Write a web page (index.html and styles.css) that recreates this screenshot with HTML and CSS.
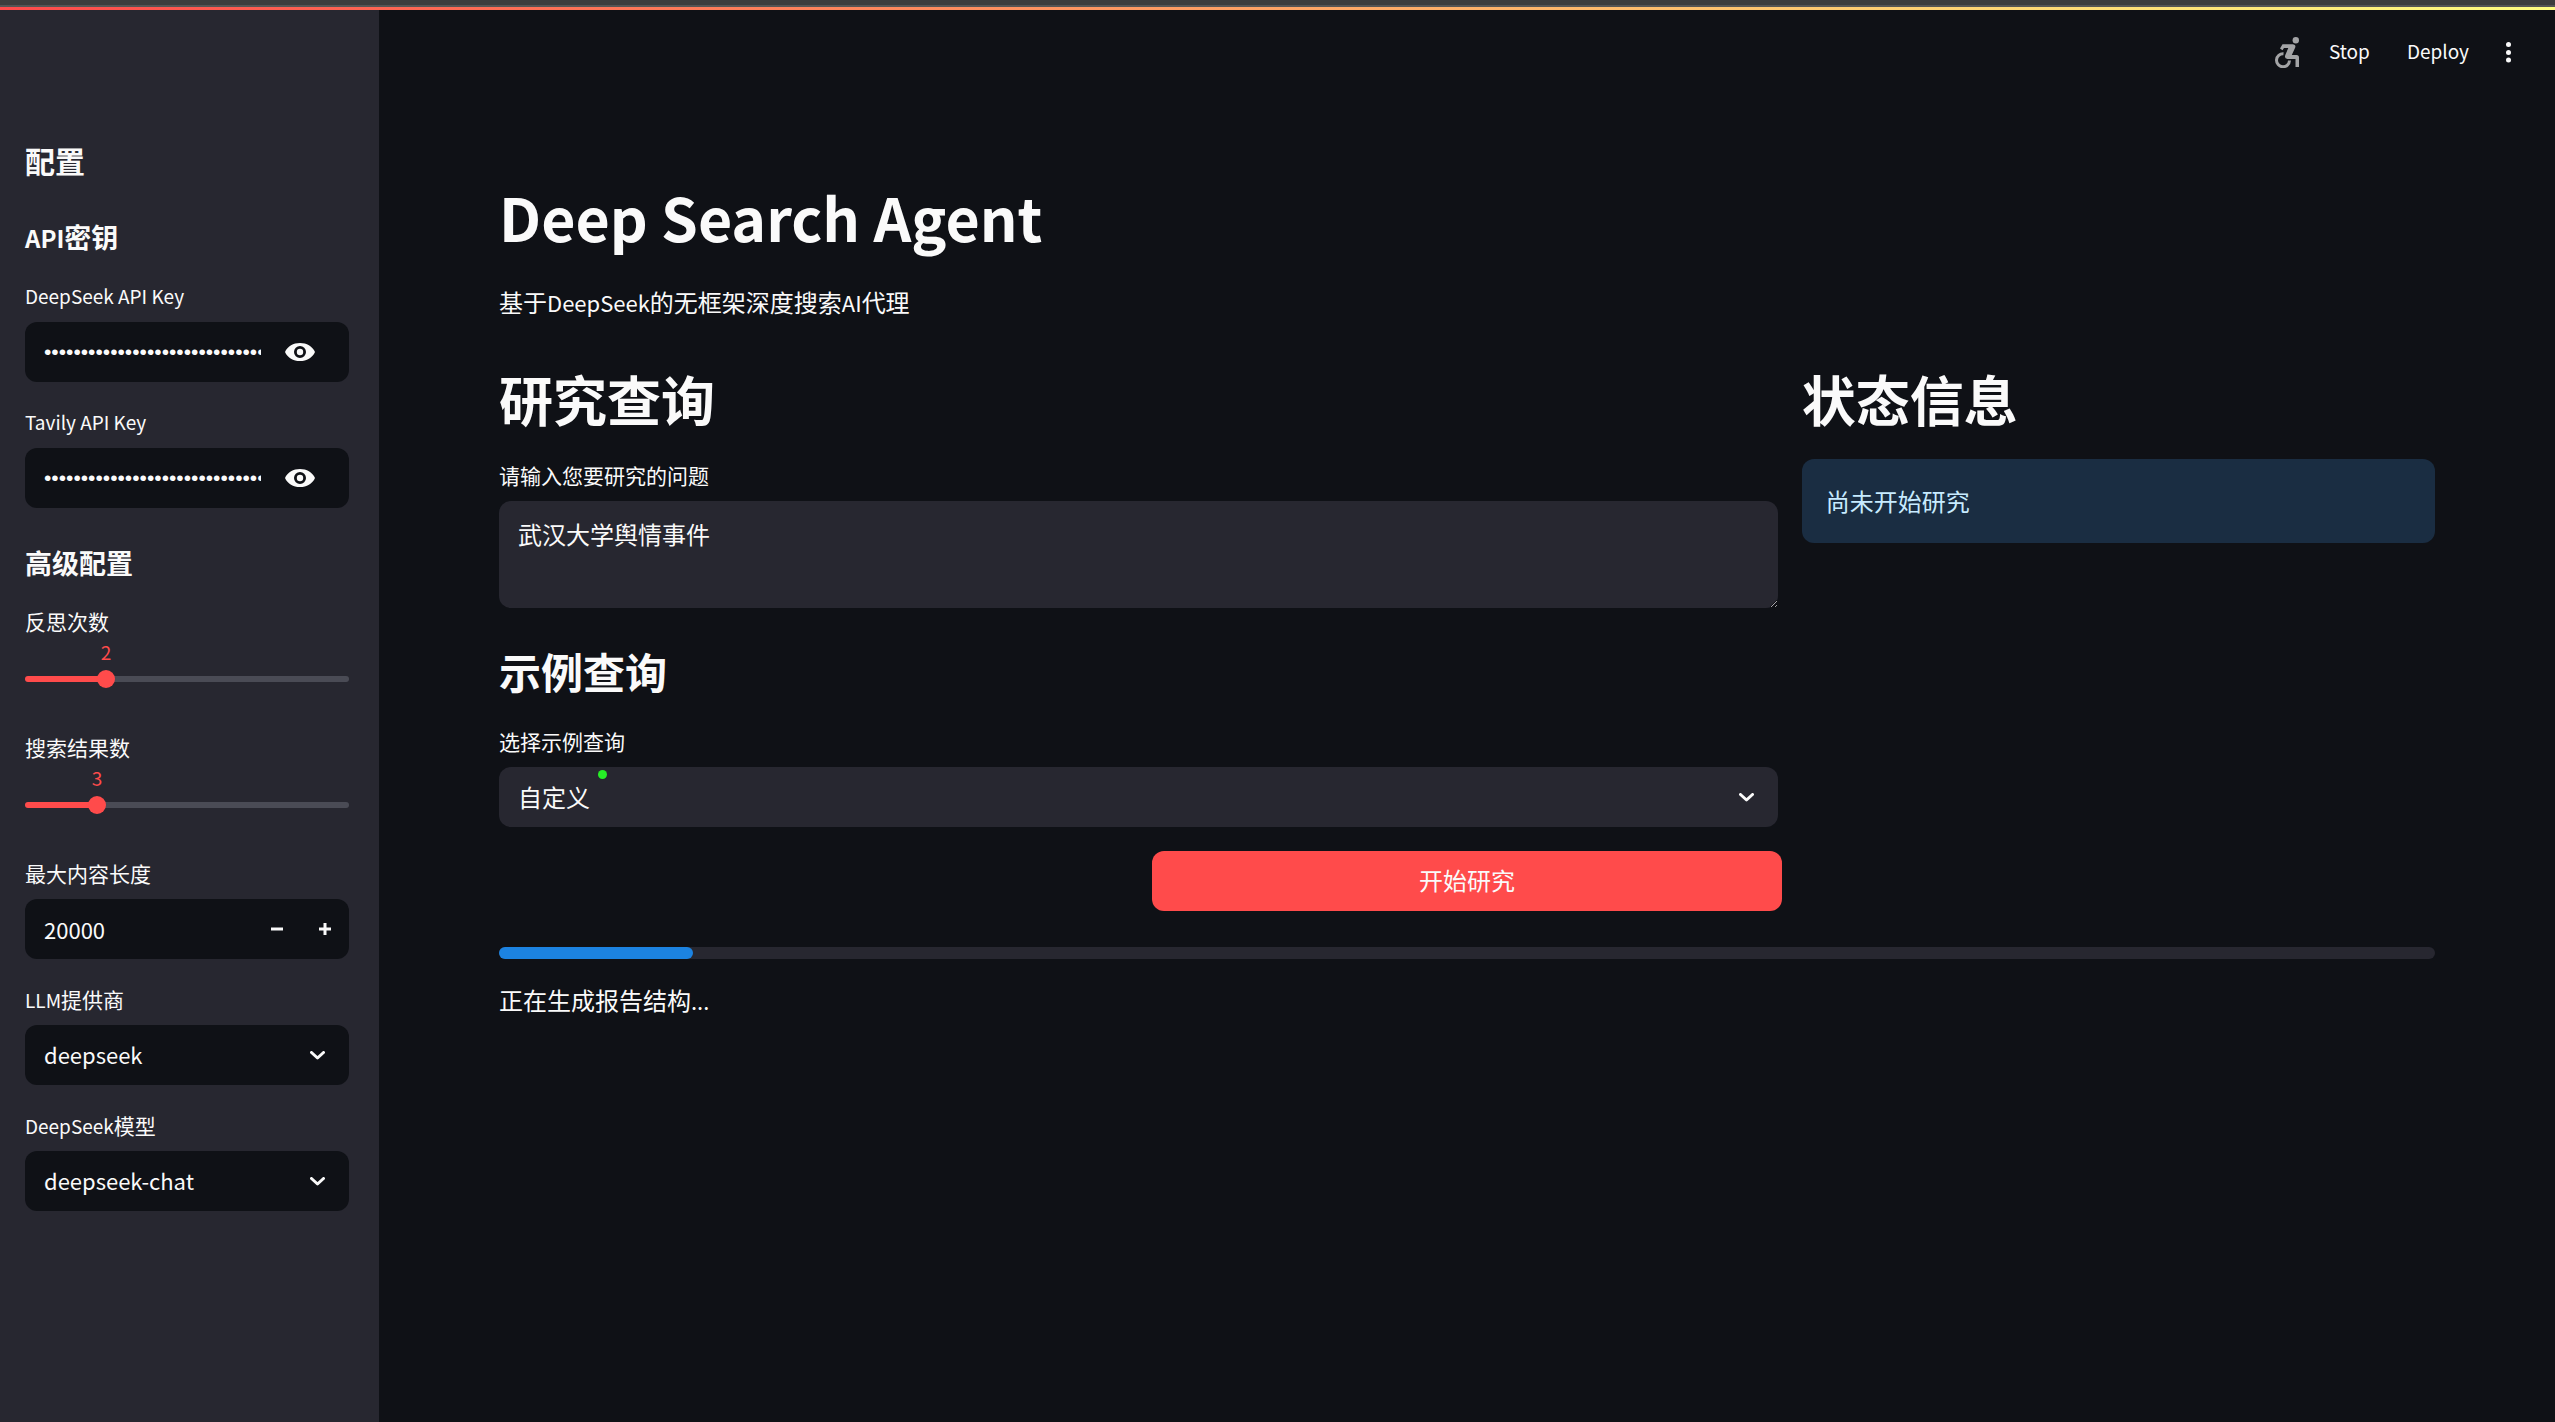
FILE: index.html
```html
<!DOCTYPE html>
<html lang="zh-CN">
<head>
<meta charset="utf-8">
<title>Deep Search Agent</title>
<link rel="stylesheet" href="styles.css">
</head>
<body>
<div class="window-edge"></div>
<div class="decoration"></div>
<div class="app">
  <aside class="sidebar">
    <h2 class="sidebar-title">配置</h2>
    <h3 class="sidebar-heading"><span class="latin-heading">API</span>密钥</h3>
    <div class="field">
      <label class="label label-latin" for="deepseek-key">DeepSeek API Key</label>
      <div class="control">
        <input class="secret" id="deepseek-key" type="password" value="00000000000000000000000000000000000">
        <button class="icon-button reveal" type="button" aria-label="Show password">
          <svg width="30" height="18" viewBox="0 0 30 18"><path fill="currentColor" fill-rule="evenodd" d="M15 0C8.2 0 2.8 3.400.3 8.300Q0 9 .3 9.700C2.800 14.600 8.200 18 15 18S27.200 14.600 29.700 9.700Q30 9 29.700 8.300C27.200 3.400 21.800 0 15 0ZM15 3a6 6 0 1 1 0 12a6 6 0 0 1 0-12Z"/><circle cx="15" cy="9" r="3.200" fill="currentColor"/></svg>
        </button>
      </div>
    </div>
    <div class="field">
      <label class="label label-latin" for="tavily-key">Tavily API Key</label>
      <div class="control">
        <input class="secret" id="tavily-key" type="password" value="00000000000000000000000000000000000">
        <button class="icon-button reveal" type="button" aria-label="Show password">
          <svg width="30" height="18" viewBox="0 0 30 18"><path fill="currentColor" fill-rule="evenodd" d="M15 0C8.2 0 2.8 3.400.3 8.300Q0 9 .3 9.700C2.800 14.600 8.200 18 15 18S27.200 14.600 29.700 9.700Q30 9 29.700 8.300C27.200 3.400 21.800 0 15 0ZM15 3a6 6 0 1 1 0 12a6 6 0 0 1 0-12Z"/><circle cx="15" cy="9" r="3.200" fill="currentColor"/></svg>
        </button>
      </div>
    </div>
    <h3 class="sidebar-heading">高级配置</h3>
    <div class="field slider-field">
      <label class="label" for="reflections">反思次数</label>
      <div class="slider" style="--fill: 25%">
        <output class="slider-value" for="reflections">2</output>
        <input class="range" id="reflections" type="range" min="1" max="5" value="2">
      </div>
    </div>
    <div class="field slider-field">
      <label class="label" for="results">搜索结果数</label>
      <div class="slider" style="--fill: 22.22%">
        <output class="slider-value" for="results">3</output>
        <input class="range" id="results" type="range" min="1" max="10" value="3">
      </div>
    </div>
    <div class="field">
      <label class="label" for="max-length">最大内容长度</label>
      <div class="control">
        <input class="text latin" id="max-length" type="text" inputmode="numeric" value="20000">
        <button class="icon-button" type="button" aria-label="减少"><svg width="12" height="12" viewBox="0 0 12 12"><path fill="currentColor" d="M0 4.500h12v3H0z"/></svg></button>
        <button class="icon-button" type="button" aria-label="增加"><svg width="12" height="12" viewBox="0 0 12 12"><path fill="currentColor" d="M0 4.500h4.500V0h3v4.500H12v3H7.500V12h-3V7.500H0z"/></svg></button>
      </div>
    </div>
    <div class="field">
      <label class="label" for="provider"><span class="label-latin">LLM</span>提供商</label>
      <div class="control">
        <select class="select latin" id="provider"><option>deepseek</option></select>
        <svg class="chevron" width="15" height="9" viewBox="0 0 15 9"><path d="M1.500 1.500l6 5.500 6-5.500"/></svg>
      </div>
    </div>
    <div class="field">
      <label class="label" for="model"><span class="label-latin">DeepSeek</span>模型</label>
      <div class="control">
        <select class="select latin" id="model"><option>deepseek-chat</option></select>
        <svg class="chevron" width="15" height="9" viewBox="0 0 15 9"><path d="M1.500 1.500l6 5.500 6-5.500"/></svg>
      </div>
    </div>
  </aside>

  <div class="page">
    <header class="toolbar">
      <svg class="running" width="24" height="31" viewBox="0 0 24 31" aria-label="Running"><circle cx="20.800" cy="3.200" r="3.200"/><path d="M7.500 7.300H17.500C20.200 7.300 21 9.200 20 11L16.800 18H21.500Q24 18 24 20.500V30H20.500V22H12.500Q9 21.500 10.300 18L13.300 11H9L7.500 13.300L5 11.500Z"/><path class="wheel" d="M8.500 16.800A6.500 6.500 0 1 0 14.500 23.500"/></svg>
      <button class="toolbar-button" type="button">Stop</button>
      <button class="toolbar-button" type="button">Deploy</button>
      <button class="menu-button" type="button" aria-label="Menu"><svg width="5" height="21" viewBox="0 0 5 21" fill="currentColor"><circle cx="2.500" cy="2.500" r="2.500"/><circle cx="2.500" cy="10.500" r="2.500"/><circle cx="2.500" cy="18" r="2.500"/></svg></button>
    </header>

    <main class="content">
      <h1 class="title">Deep Search Agent</h1>
      <p class="text-line intro">基于<span class="latin">DeepSeek</span>的无框架深度搜索<span class="latin">AI</span>代理</p>

      <div class="columns">
        <section class="query">
          <h2 class="heading">研究查询</h2>
          <div class="field">
            <label class="label" for="question">请输入您要研究的问题</label>
            <textarea class="question" id="question">武汉大学舆情事件</textarea>
          </div>
          <h3 class="subheading">示例查询</h3>
          <div class="field">
            <label class="label" for="example">选择示例查询</label>
            <div class="control">
              <select class="select" id="example"><option>自定义</option></select>
              <svg class="chevron" width="15" height="9" viewBox="0 0 15 9"><path d="M1.500 1.500l6 5.500 6-5.500"/></svg>
              <span class="marker"></span>
            </div>
          </div>
        </section>
        <section class="status">
          <h2 class="heading">状态信息</h2>
          <p class="notice">尚未开始研究</p>
        </section>
      </div>

      <div class="actions">
        <button class="primary" type="button">开始研究</button>
      </div>

      <div class="progress" role="progressbar" aria-valuenow="10" aria-label="研究进度"><div class="progress-fill" style="width: 10%"></div></div>
      <p class="text-line">正在生成报告结构<span class="latin">...</span></p>
    </main>
  </div>
</div>
</body>
</html>
```
FILE: styles.css
```css
:root {
  --bg: #0f1116;
  --surface: #272730;
  --text: #fafafa;
  --accent: #ff4b4b;
}

* { box-sizing: border-box; }

body {
  margin: 0;
  min-height: 100vh;
  display: flex;
  flex-direction: column;
  background: var(--bg);
  color: var(--text);
  font-family: "Noto Sans CJK SC", sans-serif;
  font-size: 24px;
}

h1, h2, h3, p { margin: 0; }

button, input, select, textarea {
  font: inherit;
  color: inherit;
  background: none;
  border: 0;
  margin: 0;
  padding: 0;
  outline: 0;
}

.window-edge {
  height: 7px;
  background: #3d3d3d;
  border-bottom: 2px solid #555;
}

.decoration {
  height: 3px;
  background: linear-gradient(90deg, #ff4b4b, #fffd80);
}

.app { display: flex; flex: 1; }

/* Latin runs are set smaller than the CJK text beside them */
.latin { font-size: 22px; }
.label-latin { font-size: 19px; }
.latin-heading { font-size: 24px; }

/* Sidebar */
.sidebar {
  flex: 0 0 379px;
  min-width: 0;
  padding: 132px 30px 24px 25px;
  background: var(--surface);
  display: flex;
  flex-direction: column;
  gap: 24px;
}

.sidebar-title {
  padding-bottom: 4px;
  font-size: 30px;
  line-height: 36px;
}

.sidebar-heading {
  padding: 15px 0 2px;
  font-size: 27px;
  line-height: 32px;
}

.field { display: flex; flex-direction: column; gap: 6px; }

.label {
  height: 36px;
  font-size: 21px;
  line-height: 32px;
}

.label.label-latin { font-size: 19px; }

.control {
  position: relative;
  display: flex;
  align-items: center;
  height: 60px;
  border-radius: 12px;
  background: var(--surface);
}

.sidebar .control { background: var(--bg); }

.text, .select, .secret { height: 60px; width: 100%; min-width: 0; flex: 1; }
.text { padding-left: 19px; }
.secret { margin-left: 19px; font-family: "Liberation Sans", sans-serif; font-size: 21px; }
.select { appearance: none; padding: 0 48px 2px 19px; }

.chevron {
  position: absolute;
  right: 24px;
  fill: none;
  stroke: currentColor;
  stroke-width: 3;
  stroke-linecap: round;
  stroke-linejoin: round;
  pointer-events: none;
}

.icon-button {
  flex: none;
  width: 48px;
  height: 60px;
  display: flex;
  align-items: center;
  justify-content: center;
}

.reveal { width: 88px; padding-right: 10px; }

.slider-field { gap: 0; }

.slider {
  position: relative;
  height: 66px;
  display: flex;
  flex-direction: column;
  gap: 7px;
}

.slider-value {
  width: 24px;
  margin-left: calc(var(--fill) - 12px);
  color: var(--accent);
  font-size: 19px;
  line-height: 22px;
  text-align: center;
}

.slider::before {
  content: "";
  position: absolute;
  top: 35px;
  left: 0;
  right: 0;
  height: 6px;
  border-radius: 3px;
  background: linear-gradient(90deg, var(--accent) var(--fill), #4a4b55 var(--fill));
}

.range {
  appearance: none;
  position: relative;
  height: 18px;
  margin: 0 -9px;
}

.range::-webkit-slider-thumb {
  appearance: none;
  width: 18px;
  height: 18px;
  border-radius: 50%;
  background: var(--accent);
}

/* Page */
.page { flex: 1; min-width: 0; }

.toolbar {
  height: 90px;
  padding: 0 44px 6px 0;
  display: flex;
  align-items: center;
  justify-content: flex-end;
}

.running { fill: #a3a4a6; margin-right: 30px; }
.running .wheel { fill: none; stroke: #a3a4a6; stroke-width: 3; }

.toolbar-button { margin-right: 37px; padding-bottom: 4px; font-size: 19px; }
.menu-button { display: flex; }

.content { padding: 77px 120px 96px; }

.title { font-size: 59px; line-height: 80px; }

.text-line { font-size: 24px; line-height: 38px; }
.intro { margin-top: 26px; }

.columns { display: flex; gap: 24px; margin-top: 36px; }
.query { flex: 1 1 calc(66.6666% - 24px); }
.status { flex: 1 1 calc(33.3333% - 24px); }

.heading { font-size: 54px; line-height: 84px; margin-bottom: 18px; }

.question {
  height: 107px;
  padding: 15px 19px;
  border-radius: 12px;
  background: var(--surface);
  font-size: 24px;
  line-height: 36px;
  resize: vertical;
}

.subheading {
  margin: 33px 0 24px;
  font-size: 42px;
  line-height: 60px;
}

.marker {
  position: absolute;
  left: 99px;
  top: 3px;
  width: 9px;
  height: 9px;
  border-radius: 50%;
  background: #26ee26;
}

.notice {
  padding: 24px;
  border-radius: 12px;
  background: #1a2d42;
  color: #c7ebff;
  line-height: 36px;
}

.actions {
  margin-top: 24px;
  display: grid;
  grid-template-columns: repeat(3, 1fr);
  column-gap: 24px;
}

.primary {
  grid-column: 2;
  height: 60px;
  padding-bottom: 4px;
  border-radius: 12px;
  background: var(--accent);
}

.progress {
  height: 12px;
  margin: 36px 0 22px;
  border-radius: 6px;
  background: var(--surface);
}

.progress-fill {
  height: 12px;
  border-radius: 6px;
  background: #1c83e1;
}
```
